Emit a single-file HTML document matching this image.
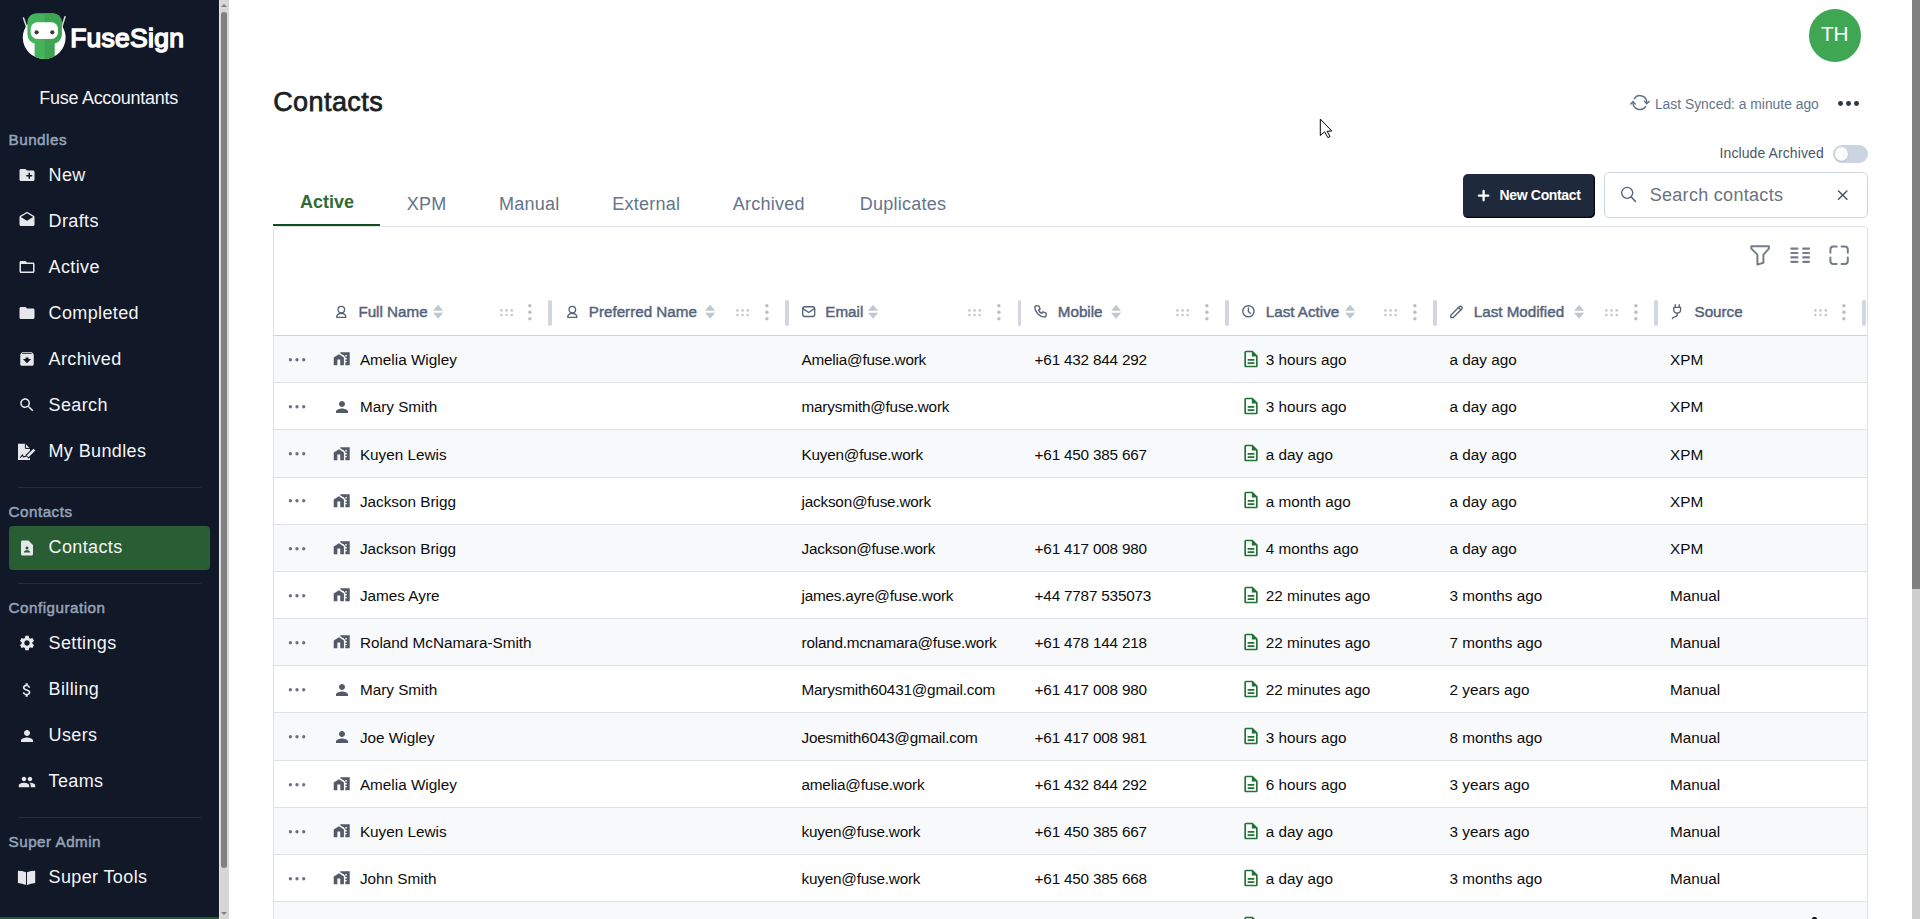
<!DOCTYPE html>
<html><head><meta charset="utf-8"><title>Contacts</title>
<style>
html,body{margin:0;padding:0;}
body{width:1920px;height:919px;overflow:hidden;position:relative;background:#fff;font-family:"Liberation Sans",sans-serif;}
.a{position:absolute;}
.t{position:absolute;line-height:1;white-space:nowrap;}
svg.a{overflow:visible;}
</style></head><body>
<div class="a" style="left:0px;top:0px;width:219px;height:919px;background:#111827;"></div>
<div class="a" style="left:0px;top:917px;width:219px;height:2px;background:#26592f;"></div>
<svg class="a" style="left:15px;top:5px;" width="60" height="60" viewBox="15 5 60 60">
<defs><clipPath id="lc"><circle cx="44.2" cy="37.6" r="21.4"/></clipPath></defs>
<line x1="23.5" y1="18" x2="27" y2="28" stroke="#d4d7da" stroke-width="1.6" stroke-linecap="round"/>
<line x1="65" y1="16.8" x2="61.8" y2="27" stroke="#d4d7da" stroke-width="1.6" stroke-linecap="round"/>
<circle cx="44.2" cy="37.6" r="21.4" fill="#ffffff"/>
<g clip-path="url(#lc)">
<rect x="34.6" y="40" width="19.9" height="20" fill="#46b35c"/>
<rect x="44.6" y="40" width="9.9" height="20" fill="#3ea452"/>
</g>
<rect x="27.4" y="13.2" width="34.3" height="30.4" rx="9" fill="#46b35c"/>
<path d="M44.6 13.2 H52.7 A9 9 0 0 1 61.7 22.2 V34.6 A9 9 0 0 1 52.7 43.6 H44.6 Z" fill="#3ea452"/>
<rect x="30.7" y="22.3" width="27.3" height="16.7" rx="6.5" fill="#ffffff"/>
<circle cx="36.6" cy="32.3" r="2.1" fill="#3b3b3b"/>
<circle cx="52.3" cy="32.3" r="2.1" fill="#3b3b3b"/>
</svg>
<div class="t " style="left:70.20px;top:25.17px;font-size:26.5px;color:#ffffff;letter-spacing:0.25px;-webkit-text-stroke:1.5px #ffffff;">FuseSign</div>
<div class="t " style="left:-0.90px;top:88.96px;font-size:18px;color:#f3f4f6;letter-spacing:-0.28px;width:219px;text-align:center;">Fuse Accountants</div>
<div class="t " style="left:8.60px;top:132.03px;font-size:15.2px;color:#94a3b8;letter-spacing:0.5px;-webkit-text-stroke:0.5px #94a3b8;">Bundles</div>
<div class="t " style="left:8.60px;top:504.43px;font-size:15.2px;color:#94a3b8;letter-spacing:0.5px;-webkit-text-stroke:0.5px #94a3b8;">Contacts</div>
<div class="t " style="left:8.60px;top:600.13px;font-size:15.2px;color:#94a3b8;letter-spacing:0.5px;-webkit-text-stroke:0.5px #94a3b8;">Configuration</div>
<div class="t " style="left:8.60px;top:834.13px;font-size:15.2px;color:#94a3b8;letter-spacing:0.5px;-webkit-text-stroke:0.5px #94a3b8;">Super Admin</div>
<div class="a" style="left:18px;top:487px;width:183px;height:1px;background:#222c3b;"></div>
<div class="a" style="left:18px;top:583px;width:183px;height:1px;background:#222c3b;"></div>
<div class="a" style="left:18px;top:817px;width:183px;height:1px;background:#222c3b;"></div>
<div class="a" style="left:9px;top:526px;width:201px;height:44px;background:#295d34;border-radius:4px;"></div>
<div class="t " style="left:48.50px;top:165.66px;font-size:18px;color:#f3f4f6;letter-spacing:0.38px;">New</div>
<div class="t " style="left:48.50px;top:211.71px;font-size:18px;color:#f3f4f6;letter-spacing:0.38px;">Drafts</div>
<div class="t " style="left:48.50px;top:257.76px;font-size:18px;color:#f3f4f6;letter-spacing:0.38px;">Active</div>
<div class="t " style="left:48.50px;top:303.81px;font-size:18px;color:#f3f4f6;letter-spacing:0.38px;">Completed</div>
<div class="t " style="left:48.50px;top:349.86px;font-size:18px;color:#f3f4f6;letter-spacing:0.38px;">Archived</div>
<div class="t " style="left:48.50px;top:395.91px;font-size:18px;color:#f3f4f6;letter-spacing:0.38px;">Search</div>
<div class="t " style="left:48.50px;top:441.96px;font-size:18px;color:#f3f4f6;letter-spacing:0.38px;">My Bundles</div>
<div class="t " style="left:48.50px;top:537.86px;font-size:18px;color:#f3f4f6;letter-spacing:0.38px;">Contacts</div>
<div class="t " style="left:48.50px;top:633.76px;font-size:18px;color:#f3f4f6;letter-spacing:0.38px;">Settings</div>
<div class="t " style="left:48.50px;top:679.96px;font-size:18px;color:#f3f4f6;letter-spacing:0.38px;">Billing</div>
<div class="t " style="left:48.50px;top:726.16px;font-size:18px;color:#f3f4f6;letter-spacing:0.38px;">Users</div>
<div class="t " style="left:48.50px;top:772.36px;font-size:18px;color:#f3f4f6;letter-spacing:0.38px;">Teams</div>
<div class="t " style="left:48.50px;top:868.46px;font-size:18px;color:#f3f4f6;letter-spacing:0.38px;">Super Tools</div>
<svg class="a" style="left:17.7px;top:166.4px;" width="18" height="18" viewBox="0 0 24 24"><path d="M20 6h-8l-2-2H4c-1.11 0-1.99.89-1.99 2L2 18c0 1.11.89 2 2 2h16c1.11 0 2-.89 2-2V8c0-1.11-.89-2-2-2zm-1 8h-3v3h-2v-3h-3v-2h3V9h2v3h3v2z" fill="#e5e7eb"/></svg>
<svg class="a" style="left:17.7px;top:211.2px;" width="18" height="18" viewBox="0 0 24 24"><path d="M21.99 8c0-.72-.37-1.35-.94-1.7L12 1 2.95 6.3C2.38 6.65 2 7.28 2 8v10c0 1.1.9 2 2 2h16c1.1 0 2-.9 2-2l-.01-10zM12 13L3.74 7.84 12 3l8.26 4.84L12 13z" fill="#e5e7eb"/></svg>
<svg class="a" style="left:17.7px;top:257.9px;" width="18" height="18" viewBox="0 0 24 24"><path d="M20 6h-8l-2-2H4c-1.1 0-1.99.9-1.99 2L2 18c0 1.1.9 2 2 2h16c1.1 0 2-.9 2-2V8c0-1.1-.9-2-2-2zm0 12H4V8h16v10z" fill="#e5e7eb"/></svg>
<svg class="a" style="left:17.7px;top:303.8px;" width="18" height="18" viewBox="0 0 24 24"><path d="M10 4H4c-1.1 0-1.99.9-1.99 2L2 18c0 1.1.9 2 2 2h16c1.1 0 2-.9 2-2V8c0-1.1-.9-2-2-2h-8l-2-2z" fill="#e5e7eb"/></svg>
<svg class="a" style="left:17.7px;top:350.4px;" width="18" height="18" viewBox="0 0 24 24"><path d="M20.54 5.23l-1.39-1.68C18.88 3.21 18.47 3 18 3H6c-.47 0-.88.21-1.16.55L3.46 5.23C3.17 5.57 3 6.02 3 6.5V19c0 1.1.9 2 2 2h14c1.1 0 2-.9 2-2V6.5c0-.48-.17-.93-.46-1.27zM12 17.5L6.5 12H10v-2h4v2h3.5L12 17.5zM5.12 5l.81-1h12l.94 1H5.12z" fill="#e5e7eb"/></svg>
<svg class="a" style="left:17.7px;top:395.8px;" width="18" height="18" viewBox="0 0 24 24"><path d="M15.5 14h-.79l-.28-.27C15.41 12.59 16 11.11 16 9.5 16 5.91 13.09 3 9.5 3S3 5.91 3 9.5 5.91 16 9.5 16c1.61 0 3.090-.59 4.23-1.57l.27.28v.79l5 4.99L20.49 19l-4.99-5zm-6 0C7.01 14 5 11.99 5 9.5S7.01 5 9.5 5 14 7.01 14 9.5 11.990 14 9.5 14z" fill="#e5e7eb"/></svg>
<svg class="a" style="left:17px;top:442px;" width="19" height="19" viewBox="17 442 19 19">
<path d="M18 443.8 H25.4 L30 448.4 V459.9 H18 Z" fill="#e5e7eb"/>
<path d="M25.4 443.8 V448.4 H30" fill="none" stroke="#111827" stroke-width="1"/>
<path d="M27 457 L34.6 449.4" stroke="#111827" stroke-width="4.6" stroke-linecap="butt"/>
<path d="M27.6 456.4 L34.4 449.6" stroke="#e5e7eb" stroke-width="2.6" stroke-linecap="butt"/>
<path d="M26.4 457.6 l1.2 -0.2 l-1 -1 z" fill="#e5e7eb"/>
<path d="M20.2 457.6 L22.5 455 L23.4 456.9 L26.4 456.3" fill="none" stroke="#111827" stroke-width="1.1"/>
</svg>
<svg class="a" style="left:18px;top:538.5px;" width="18" height="18" viewBox="0 0 24 24"><path d="M14 2H6c-1.1 0-1.99.9-1.99 2L4 20c0 1.1.89 2 1.99 2H18c1.1 0 2-.9 2-2V8l-6-6zm-2 8c1.1 0 2 .9 2 2s-.9 2-2 2-2-.9-2-2 .9-2 2-2zm4 8H8v-.57c0-.81.48-1.53 1.22-1.85.85-.37 1.79-.58 2.78-.58.99 0 1.93.21 2.78.58.74.32 1.22 1.04 1.22 1.85V18z" fill="#e5e7eb"/></svg>
<svg class="a" style="left:17.7px;top:633.8px;" width="18" height="18" viewBox="0 0 24 24"><path d="M19.14 12.94c.04-.3.06-.61.06-.94 0-.32-.02-.64-.07-.94l2.03-1.58c.18-.14.23-.41.12-.61l-1.92-3.32c-.12-.22-.37-.29-.59-.22l-2.39.96c-.5-.38-1.03-.7-1.62-.94l-.36-2.54c-.04-.24-.24-.41-.48-.41h-3.84c-.24 0-.43.17-.47.41l-.36 2.54c-.59.24-1.13.57-1.62.94l-2.39-.96c-.22-.08-.47 0-.59.22L2.74 8.87c-.12.21-.08.47.12.61l2.03 1.58c-.05.3-.09.63-.09.94s.02.64.07.94l-2.03 1.58c-.18.14-.23.41-.12.61l1.92 3.32c.12.22.37.29.59.22l2.39-.96c.5.38 1.03.7 1.62.94l.36 2.54c.05.24.24.41.48.41h3.84c.24 0 .44-.17.47-.41l.36-2.54c.59-.24 1.13-.56 1.62-.94l2.39.96c.22.08.47 0 .59-.22l1.92-3.32c.12-.22.07-.47-.12-.61l-2.01-1.58zM12 15.6c-1.98 0-3.6-1.62-3.6-3.6s1.62-3.6 3.6-3.6 3.6 1.62 3.6 3.6-1.62 3.6-3.6 3.6z" fill="#e5e7eb"/></svg>
<svg class="a" style="left:17.7px;top:680.8px;" width="18" height="18" viewBox="0 0 24 24"><path d="M11.8 10.9c-2.27-.59-3-1.2-3-2.15 0-1.09 1.01-1.85 2.7-1.85 1.78 0 2.44.85 2.5 2.1h2.21c-.07-1.72-1.12-3.3-3.21-3.81V3h-3v2.16c-1.94.42-3.5 1.68-3.5 3.610 0 2.31 1.91 3.46 4.7 4.13 2.5.6 3 1.48 3 2.41 0 .69-.49 1.79-2.7 1.79-2.06 0-2.87-.92-2.980-2.1h-2.2c.12 2.19 1.76 3.42 3.68 3.83V21h3v-2.15c1.95-.37 3.5-1.5 3.5-3.55 0-2.84-2.43-3.81-4.7-4.4z" fill="#e5e7eb"/></svg>
<svg class="a" style="left:17.7px;top:727px;" width="18" height="18" viewBox="0 0 24 24"><path d="M12 12c2.21 0 4-1.79 4-4s-1.79-4-4-4-4 1.79-4 4 1.79 4 4 4zm0 2c-2.67 0-8 1.34-8 4v2h16v-2c0-2.66-5.33-4-8-4z" fill="#e5e7eb"/></svg>
<svg class="a" style="left:17.7px;top:772.6px;" width="18" height="18" viewBox="0 0 24 24"><path d="M16 11c1.66 0 2.99-1.34 2.99-3S17.66 5 16 5c-1.66 0-3 1.34-3 3s1.34 3 3 3zm-8 0c1.66 0 2.99-1.34 2.99-3S9.66 5 8 5C6.34 5 5 6.34 5 8s1.34 3 3 3zm0 2c-2.33 0-7 1.17-7 3.5V19h14v-2.5c0-2.33-4.67-3.5-7-3.5zm8 0c-.29 0-.62.02-.97.05 1.16.84 1.97 1.97 1.97 3.45V19h6v-2.5c0-2.33-4.67-3.5-7-3.5z" fill="#e5e7eb"/></svg>
<svg class="a" style="left:17px;top:869px;" width="20" height="17" viewBox="17 869 20 17">
<path d="M17.9 870.8 Q22 870.8 26 872.2 V884.9 Q22 883.2 17.9 882.9 Z" fill="#e5e7eb"/>
<path d="M35.2 870.8 Q31 870.8 27 872.2 V884.9 Q31 883.2 35.2 882.9 Z" fill="#e5e7eb"/>
</svg>
<div class="a" style="left:219px;top:0px;width:10px;height:919px;background:#d6d6d6;border-left:1px solid #e6e6e6;box-sizing:border-box;"></div>
<div class="a" style="left:221px;top:12px;width:6px;height:856px;background:#808080;border-radius:3px;"></div>
<svg class="a" style="left:219px;top:0px;" width="10" height="12" viewBox="0 0 10 12"><path d="M2 7 L5 4 L8 7 Z" fill="#808080"/></svg>
<svg class="a" style="left:219px;top:907px;" width="10" height="12" viewBox="0 0 10 12"><path d="M2 5 L5 8 L8 5 Z" fill="#808080"/></svg>
<div class="a" style="left:1912px;top:0px;width:8px;height:919px;background:#cfcfcf;"></div>
<div class="a" style="left:1912px;top:0px;width:8px;height:589px;background:#808080;"></div>
<div class="a" style="left:1809px;top:9px;width:52.3px;height:52.6px;background:#3fa653;border-radius:50%;"></div>
<div class="t " style="left:1820.90px;top:24.29px;font-size:20.8px;color:#ffffff;">TH</div>
<div class="t " style="left:273.20px;top:88.84px;font-size:27px;color:#1c1f24;letter-spacing:0.42px;-webkit-text-stroke:0.75px #1c1f24;">Contacts</div>
<svg class="a" style="left:1628px;top:92px;" width="24" height="22" viewBox="1628 92 24 22"><g fill="none" stroke="#64748b" stroke-width="1.5" stroke-linecap="round" stroke-linejoin="round"><path d="M1634.25 98.64 A6.9 6.9 0 0 1 1646.8 102.6"/><path d="M1644.6 101.4 L1646.8 103.7 L1649 101.4"/><path d="M1645.55 106.56 A6.9 6.9 0 0 1 1633 102.6"/><path d="M1630.8 103.9 L1633 101.6 L1635.2 103.9"/></g></svg>
<div class="t " style="left:1654.90px;top:97.68px;font-size:13.85px;color:#64748b;">Last Synced: a minute ago</div>
<div class="a" style="left:1837.9px;top:101.1px;width:4.8px;height:4.8px;background:#2d3748;border-radius:50%;"></div>
<div class="a" style="left:1845.9px;top:101.1px;width:4.8px;height:4.8px;background:#2d3748;border-radius:50%;"></div>
<div class="a" style="left:1853.9px;top:101.1px;width:4.8px;height:4.8px;background:#2d3748;border-radius:50%;"></div>
<div class="t " style="left:1719.50px;top:145.85px;font-size:14px;color:#4a5568;letter-spacing:0.1px;">Include Archived</div>
<div class="a" style="left:1833px;top:145px;width:35px;height:18px;background:#cbd5e1;border-radius:9px;"></div>
<div class="a" style="left:1834.8px;top:147.1px;width:13.6px;height:13.6px;background:#f8fafc;border-radius:50%;box-shadow:0 0.5px 1px rgba(0,0,0,.2);"></div>
<div class="a" style="left:1463px;top:174px;width:131.6px;height:43.7px;background:#1e293b;border-radius:5px;box-shadow:inset -1.2px -1.2px 0 #05080d;"></div>
<svg class="a" style="left:1476px;top:188px;" width="15" height="15" viewBox="0 0 15 15"><path d="M7.6 2.9 V12.3 M2.9 7.6 H12.3" stroke="#fff" stroke-width="2.3" stroke-linecap="round"/></svg>
<div class="t " style="left:1499.60px;top:188.35px;font-size:14px;color:#ffffff;font-weight:700;letter-spacing:-0.35px;">New Contact</div>
<div class="a" style="left:1604px;top:172px;width:264px;height:46px;border:1px solid #cbd5e1;border-radius:5px;box-sizing:border-box;background:#fff;"></div>
<svg class="a" style="left:1619px;top:186px;" width="19" height="19" viewBox="0 0 19 19"><circle cx="8.2" cy="6.8" r="5.5" fill="none" stroke="#55637a" stroke-width="1.35"/><path d="M12.1 10.7 L16.4 15.5" stroke="#55637a" stroke-width="1.5" stroke-linecap="round"/></svg>
<div class="t " style="left:1649.70px;top:185.56px;font-size:18px;color:#6b7280;letter-spacing:0.3px;">Search contacts</div>
<svg class="a" style="left:1836px;top:189px;" width="13" height="12" viewBox="0 0 13 12"><path d="M2.5 2 L10.9 10.3 M10.9 2 L2.5 10.3" stroke="#4b5563" stroke-width="1.5" stroke-linecap="round"/></svg>
<div class="t " style="left:300.00px;top:192.86px;font-size:18px;color:#2f6b35;font-weight:700;">Active</div>
<div class="t " style="left:406.70px;top:194.66px;font-size:18px;color:#64748b;letter-spacing:0.25px;">XPM</div>
<div class="t " style="left:498.90px;top:194.66px;font-size:18px;color:#64748b;letter-spacing:0.25px;">Manual</div>
<div class="t " style="left:612.20px;top:194.66px;font-size:18px;color:#64748b;letter-spacing:0.25px;">External</div>
<div class="t " style="left:732.75px;top:194.66px;font-size:18px;color:#64748b;letter-spacing:0.25px;">Archived</div>
<div class="t " style="left:859.70px;top:194.66px;font-size:18px;color:#64748b;letter-spacing:0.25px;">Duplicates</div>
<div class="a" style="left:273px;top:226px;width:1595px;height:720px;border:1px solid #dee2e6;border-radius:4px;box-sizing:border-box;background:#fff;"></div>
<div class="a" style="left:273px;top:224px;width:107px;height:2.2px;background:#114f1a;"></div>
<svg class="a" style="left:1748px;top:243px;" width="24" height="25" viewBox="1748 243 24 25"><path d="M1751.3 246.2 H1768.9 V248.6 L1763.4 254.6 V262.8 L1757.4 264.6 V254.6 L1751.3 248.6 Z" fill="none" stroke="#767d88" stroke-width="2" stroke-linejoin="round"/></svg>
<svg class="a" style="left:1788px;top:246px;" width="24" height="18" viewBox="1788 246 24 18"><path d="M1791.3 248.6 H1797.4" stroke="#767d88" stroke-width="2.2" stroke-linecap="round"/><path d="M1803.2 248.6 H1809" stroke="#767d88" stroke-width="2.2" stroke-linecap="round"/><path d="M1791.3 253 H1797.4" stroke="#767d88" stroke-width="2.2" stroke-linecap="round"/><path d="M1803.2 253 H1809" stroke="#767d88" stroke-width="2.2" stroke-linecap="round"/><path d="M1791.3 257.4 H1797.4" stroke="#767d88" stroke-width="2.2" stroke-linecap="round"/><path d="M1803.2 257.4 H1809" stroke="#767d88" stroke-width="2.2" stroke-linecap="round"/><path d="M1791.3 261.8 H1797.4" stroke="#767d88" stroke-width="2.2" stroke-linecap="round"/><path d="M1803.2 261.8 H1809" stroke="#767d88" stroke-width="2.2" stroke-linecap="round"/></svg>
<svg class="a" style="left:1827px;top:243px;" width="24" height="24" viewBox="1827 243 24 24"><g fill="none" stroke="#767d88" stroke-width="2" stroke-linecap="round"><path d="M1830.4 252.7 V249.4 A3 3 0 0 1 1833.4 246.4 H1836.7"/><path d="M1841.5 246.4 H1844.8 A3 3 0 0 1 1847.8 249.4 V252.7"/><path d="M1847.8 257.6 V260.9 A3 3 0 0 1 1844.8 263.9 H1841.5"/><path d="M1836.7 263.9 H1833.4 A3 3 0 0 1 1830.4 260.9 V257.6"/></g></svg>
<svg class="a" style="left:335.5px;top:304.5px;" width="11" height="14" viewBox="0 0 11 14"><g fill="none" stroke="#55637a" stroke-width="1.35" stroke-linecap="round" stroke-linejoin="round"><circle cx="5.3" cy="4.6" r="3.3"/><path d="M0.7 12.3 Q0.7 8.6 5.3 8.4 Q9.9 8.6 9.9 12.3 Z"/></g></svg>
<div class="t " style="left:358.40px;top:304.43px;font-size:15.2px;color:#55637a;-webkit-text-stroke:0.45px #55637a;">Full Name</div>
<svg class="a" style="left:432.9px;top:304px;" width="11" height="15" viewBox="0 0 11 15"><path d="M0 6.7 L5.1 0.8 L10.2 6.7 Z M0 8.8 L5.1 14.7 L10.2 8.8 Z" fill="#c2c7cd"/></svg>
<svg class="a" style="left:499.55px;top:308.6px;" width="14" height="7" viewBox="0 0 14 7"><g fill="#c4c8ce"><circle cx="1.35" cy="1.4" r="1.3"/><circle cx="1.35" cy="6.0" r="1.3"/><circle cx="6.550000000000001" cy="1.4" r="1.3"/><circle cx="6.550000000000001" cy="6.0" r="1.3"/><circle cx="11.75" cy="1.4" r="1.3"/><circle cx="11.75" cy="6.0" r="1.3"/></g></svg>
<svg class="a" style="left:528.35px;top:303.8px;" width="4" height="17" viewBox="0 0 4 17"><g fill="#babfc6"><circle cx="1.85" cy="1.85" r="1.75"/><circle cx="1.85" cy="8.35" r="1.75"/><circle cx="1.85" cy="14.85" r="1.75"/></g></svg>
<div class="a" style="left:548.1px;top:300px;width:3.8px;height:25.6px;background:#d0d7e0;border-radius:2px;"></div>
<svg class="a" style="left:566.7px;top:304.5px;" width="11" height="14" viewBox="0 0 11 14"><g fill="none" stroke="#55637a" stroke-width="1.35" stroke-linecap="round" stroke-linejoin="round"><circle cx="5.3" cy="4.6" r="3.3"/><path d="M0.7 12.3 Q0.7 8.6 5.3 8.4 Q9.9 8.6 9.9 12.3 Z"/></g></svg>
<div class="t " style="left:588.80px;top:304.43px;font-size:15.2px;color:#55637a;-webkit-text-stroke:0.45px #55637a;">Preferred Name</div>
<svg class="a" style="left:704.6px;top:304px;" width="11" height="15" viewBox="0 0 11 15"><path d="M0 6.7 L5.1 0.8 L10.2 6.7 Z M0 8.8 L5.1 14.7 L10.2 8.8 Z" fill="#c2c7cd"/></svg>
<svg class="a" style="left:736.45px;top:308.6px;" width="14" height="7" viewBox="0 0 14 7"><g fill="#c4c8ce"><circle cx="1.35" cy="1.4" r="1.3"/><circle cx="1.35" cy="6.0" r="1.3"/><circle cx="6.550000000000001" cy="1.4" r="1.3"/><circle cx="6.550000000000001" cy="6.0" r="1.3"/><circle cx="11.75" cy="1.4" r="1.3"/><circle cx="11.75" cy="6.0" r="1.3"/></g></svg>
<svg class="a" style="left:764.9499999999999px;top:303.8px;" width="4" height="17" viewBox="0 0 4 17"><g fill="#babfc6"><circle cx="1.85" cy="1.85" r="1.75"/><circle cx="1.85" cy="8.35" r="1.75"/><circle cx="1.85" cy="14.85" r="1.75"/></g></svg>
<div class="a" style="left:785.4px;top:300px;width:3.8px;height:25.6px;background:#d0d7e0;border-radius:2px;"></div>
<svg class="a" style="left:802.3px;top:306.2px;" width="14" height="11.5" viewBox="0 0 14 11.5"><g fill="none" stroke="#55637a" stroke-width="1.35" stroke-linecap="round" stroke-linejoin="round"><rect x="0.7" y="0.7" width="12" height="9.8" rx="2"/><path d="M1 2.6 L6.7 6.5 L12.4 2.6"/></g></svg>
<div class="t " style="left:825.30px;top:304.43px;font-size:15.2px;color:#55637a;-webkit-text-stroke:0.45px #55637a;">Email</div>
<svg class="a" style="left:867.9px;top:304px;" width="11" height="15" viewBox="0 0 11 15"><path d="M0 6.7 L5.1 0.8 L10.2 6.7 Z M0 8.8 L5.1 14.7 L10.2 8.8 Z" fill="#c2c7cd"/></svg>
<svg class="a" style="left:968.45px;top:308.6px;" width="14" height="7" viewBox="0 0 14 7"><g fill="#c4c8ce"><circle cx="1.35" cy="1.4" r="1.3"/><circle cx="1.35" cy="6.0" r="1.3"/><circle cx="6.550000000000001" cy="1.4" r="1.3"/><circle cx="6.550000000000001" cy="6.0" r="1.3"/><circle cx="11.75" cy="1.4" r="1.3"/><circle cx="11.75" cy="6.0" r="1.3"/></g></svg>
<svg class="a" style="left:997.15px;top:303.8px;" width="4" height="17" viewBox="0 0 4 17"><g fill="#babfc6"><circle cx="1.85" cy="1.85" r="1.75"/><circle cx="1.85" cy="8.35" r="1.75"/><circle cx="1.85" cy="14.85" r="1.75"/></g></svg>
<div class="a" style="left:1017.5px;top:300px;width:3.8px;height:25.6px;background:#d0d7e0;border-radius:2px;"></div>
<svg class="a" style="left:1034.1px;top:304.6px;" width="14" height="14" viewBox="0 0 14 14"><g fill="none" stroke="#55637a" stroke-width="1.35" stroke-linecap="round" stroke-linejoin="round"><path d="M2.2 0.8 h2.6 l1.3 3.3 -1.6 1 a7.2 7.2 0 0 0 3.3 3.3 l1 -1.6 3.3 1.3 v2.6 a1.3 1.3 0 0 1 -1.3 1.3 A10.5 10.5 0 0 1 0.8 2.1 a1.3 1.3 0 0 1 1.4 -1.3"/></g></svg>
<div class="t " style="left:1057.80px;top:304.43px;font-size:15.2px;color:#55637a;-webkit-text-stroke:0.45px #55637a;">Mobile</div>
<svg class="a" style="left:1110.9px;top:304px;" width="11" height="15" viewBox="0 0 11 15"><path d="M0 6.7 L5.1 0.8 L10.2 6.7 Z M0 8.8 L5.1 14.7 L10.2 8.8 Z" fill="#c2c7cd"/></svg>
<svg class="a" style="left:1176.45px;top:308.6px;" width="14" height="7" viewBox="0 0 14 7"><g fill="#c4c8ce"><circle cx="1.35" cy="1.4" r="1.3"/><circle cx="1.35" cy="6.0" r="1.3"/><circle cx="6.550000000000001" cy="1.4" r="1.3"/><circle cx="6.550000000000001" cy="6.0" r="1.3"/><circle cx="11.75" cy="1.4" r="1.3"/><circle cx="11.75" cy="6.0" r="1.3"/></g></svg>
<svg class="a" style="left:1205.15px;top:303.8px;" width="4" height="17" viewBox="0 0 4 17"><g fill="#babfc6"><circle cx="1.85" cy="1.85" r="1.75"/><circle cx="1.85" cy="8.35" r="1.75"/><circle cx="1.85" cy="14.85" r="1.75"/></g></svg>
<div class="a" style="left:1225.3px;top:300px;width:3.8px;height:25.6px;background:#d0d7e0;border-radius:2px;"></div>
<svg class="a" style="left:1242.3px;top:305px;" width="13" height="13" viewBox="0 0 13 13"><g fill="none" stroke="#55637a" stroke-width="1.35" stroke-linecap="round" stroke-linejoin="round"><circle cx="6.4" cy="6.3" r="5.6"/><path d="M6.4 3 V6.4 L8.3 8.3"/></g></svg>
<div class="t " style="left:1265.75px;top:304.43px;font-size:15.2px;color:#55637a;-webkit-text-stroke:0.45px #55637a;">Last Active</div>
<svg class="a" style="left:1344.9px;top:304px;" width="11" height="15" viewBox="0 0 11 15"><path d="M0 6.7 L5.1 0.8 L10.2 6.7 Z M0 8.8 L5.1 14.7 L10.2 8.8 Z" fill="#c2c7cd"/></svg>
<svg class="a" style="left:1384.45px;top:308.6px;" width="14" height="7" viewBox="0 0 14 7"><g fill="#c4c8ce"><circle cx="1.35" cy="1.4" r="1.3"/><circle cx="1.35" cy="6.0" r="1.3"/><circle cx="6.550000000000001" cy="1.4" r="1.3"/><circle cx="6.550000000000001" cy="6.0" r="1.3"/><circle cx="11.75" cy="1.4" r="1.3"/><circle cx="11.75" cy="6.0" r="1.3"/></g></svg>
<svg class="a" style="left:1413.15px;top:303.8px;" width="4" height="17" viewBox="0 0 4 17"><g fill="#babfc6"><circle cx="1.85" cy="1.85" r="1.75"/><circle cx="1.85" cy="8.35" r="1.75"/><circle cx="1.85" cy="14.85" r="1.75"/></g></svg>
<div class="a" style="left:1433.2px;top:300px;width:3.8px;height:25.6px;background:#d0d7e0;border-radius:2px;"></div>
<svg class="a" style="left:1450.0px;top:304.6px;" width="13" height="14" viewBox="0 0 13 14"><g fill="none" stroke="#55637a" stroke-width="1.35" stroke-linecap="round" stroke-linejoin="round"><path d="M0.8 12.6 h2.4 l8.4 -8.4 a1.7 1.7 0 1 0 -2.4 -2.4 l-8.4 8.4 v2.4"/><path d="M8.4 2.4 l2.4 2.4"/></g></svg>
<div class="t " style="left:1473.75px;top:304.43px;font-size:15.2px;color:#55637a;-webkit-text-stroke:0.45px #55637a;">Last Modified</div>
<svg class="a" style="left:1573.65px;top:304px;" width="11" height="15" viewBox="0 0 11 15"><path d="M0 6.7 L5.1 0.8 L10.2 6.7 Z M0 8.8 L5.1 14.7 L10.2 8.8 Z" fill="#c2c7cd"/></svg>
<svg class="a" style="left:1605.45px;top:308.6px;" width="14" height="7" viewBox="0 0 14 7"><g fill="#c4c8ce"><circle cx="1.35" cy="1.4" r="1.3"/><circle cx="1.35" cy="6.0" r="1.3"/><circle cx="6.550000000000001" cy="1.4" r="1.3"/><circle cx="6.550000000000001" cy="6.0" r="1.3"/><circle cx="11.75" cy="1.4" r="1.3"/><circle cx="11.75" cy="6.0" r="1.3"/></g></svg>
<svg class="a" style="left:1633.9px;top:303.8px;" width="4" height="17" viewBox="0 0 4 17"><g fill="#babfc6"><circle cx="1.85" cy="1.85" r="1.75"/><circle cx="1.85" cy="8.35" r="1.75"/><circle cx="1.85" cy="14.85" r="1.75"/></g></svg>
<div class="a" style="left:1653.8px;top:300px;width:3.8px;height:25.6px;background:#d0d7e0;border-radius:2px;"></div>
<svg class="a" style="left:1671.3px;top:304.2px;" width="11" height="16" viewBox="0 0 11 16"><g fill="none" stroke="#55637a" stroke-width="1.35" stroke-linecap="round" stroke-linejoin="round"><path d="M4.3 0.7 V3.3 M8.2 0.7 V3.3"/><path d="M2.8 3.3 H9.6 V5.8 A3.4 3.4 0 0 1 2.8 5.8 Z"/><path d="M6.2 9.2 V10.8 Q6.2 12.6 3.6 12.9 Q2 13.2 1.3 14.6"/></g></svg>
<div class="t " style="left:1694.50px;top:304.43px;font-size:15.2px;color:#55637a;-webkit-text-stroke:0.45px #55637a;">Source</div>
<svg class="a" style="left:1813.75px;top:308.6px;" width="14" height="7" viewBox="0 0 14 7"><g fill="#c4c8ce"><circle cx="1.35" cy="1.4" r="1.3"/><circle cx="1.35" cy="6.0" r="1.3"/><circle cx="6.550000000000001" cy="1.4" r="1.3"/><circle cx="6.550000000000001" cy="6.0" r="1.3"/><circle cx="11.75" cy="1.4" r="1.3"/><circle cx="11.75" cy="6.0" r="1.3"/></g></svg>
<svg class="a" style="left:1842.15px;top:303.8px;" width="4" height="17" viewBox="0 0 4 17"><g fill="#babfc6"><circle cx="1.85" cy="1.85" r="1.75"/><circle cx="1.85" cy="8.35" r="1.75"/><circle cx="1.85" cy="14.85" r="1.75"/></g></svg>
<div class="a" style="left:1862.0px;top:300px;width:3.8px;height:25.6px;background:#d0d7e0;border-radius:2px;"></div>
<div class="a" style="left:274px;top:335px;width:1593px;height:1px;background:#ced4da;"></div>
<div class="a" style="left:274px;top:336.0px;width:1593px;height:46.18px;background:#f8f9fa;"></div>
<div class="a" style="left:274px;top:382.18px;width:1593px;height:1px;background:#dee2e6;"></div>
<svg class="a" style="left:286px;top:356.89px;" width="22" height="6" viewBox="0 0 22 6"><circle cx="4.399999999999977" cy="2.75" r="1.65" fill="#6b7280"/><circle cx="11.0" cy="2.75" r="1.65" fill="#6b7280"/><circle cx="17.69999999999999" cy="2.75" r="1.65" fill="#6b7280"/></svg>
<svg class="a" style="left:333.07px;top:350.19px;" width="17.45" height="17.45" viewBox="0 0 24 24"><path d="M8.17 5.7L1 10.48V21h5v-8h4v8h5V10.25z M10 3v1.51l2 1.33L13.73 7H15v.85l2 1.34V11h2v2h-2v2h2v2h-2v4h6V3H10zm9 6h-2V7h2v2z" fill="#525a68"/></svg>
<div class="t " style="left:359.90px;top:352.14px;font-size:15.3px;color:#0c0c0c;">Amelia Wigley</div>
<div class="t " style="left:801.50px;top:352.14px;font-size:15.3px;color:#0c0c0c;letter-spacing:-0.2px;">Amelia@fuse.work</div>
<div class="t " style="left:1034.60px;top:352.14px;font-size:15.3px;color:#0c0c0c;letter-spacing:-0.2px;">+61 432 844 292</div>
<svg class="a" style="left:1240.9px;top:348.89px;" width="20" height="20" viewBox="0 0 24 24"><path d="M8 16h8v2H8zm0-4h8v2H8zm6-10H6c-1.1 0-2 .9-2 2v16c0 1.1.89 2 1.99 2H18c1.1 0 2-.9 2-2V8l-6-6zm4 18H6V4h7v5h5v11z" fill="#227233"/></svg>
<div class="t " style="left:1265.75px;top:352.14px;font-size:15.3px;color:#0c0c0c;">3 hours ago</div>
<div class="t " style="left:1449.50px;top:352.14px;font-size:15.3px;color:#0c0c0c;">a day ago</div>
<div class="t " style="left:1670.00px;top:352.14px;font-size:15.3px;color:#0c0c0c;">XPM</div>
<div class="a" style="left:274px;top:429.36px;width:1593px;height:1px;background:#dee2e6;"></div>
<svg class="a" style="left:286px;top:404.07px;" width="22" height="6" viewBox="0 0 22 6"><circle cx="4.399999999999977" cy="2.75" r="1.65" fill="#6b7280"/><circle cx="11.0" cy="2.75" r="1.65" fill="#6b7280"/><circle cx="17.69999999999999" cy="2.75" r="1.65" fill="#6b7280"/></svg>
<svg class="a" style="left:332.9px;top:397.9px;" width="18" height="18" viewBox="0 0 24 24"><path d="M12 12c2.21 0 4-1.79 4-4s-1.79-4-4-4-4 1.79-4 4 1.79 4 4 4zm0 2c-2.67 0-8 1.34-8 4v2h16v-2c0-2.66-5.33-4-8-4z" fill="#525a68"/></svg>
<div class="t " style="left:359.90px;top:399.32px;font-size:15.3px;color:#0c0c0c;">Mary Smith</div>
<div class="t " style="left:801.50px;top:399.32px;font-size:15.3px;color:#0c0c0c;letter-spacing:-0.2px;">marysmith@fuse.work</div>
<div class="t " style="left:1034.60px;top:399.32px;font-size:15.3px;color:#0c0c0c;letter-spacing:-0.2px;"></div>
<svg class="a" style="left:1240.9px;top:396.07px;" width="20" height="20" viewBox="0 0 24 24"><path d="M8 16h8v2H8zm0-4h8v2H8zm6-10H6c-1.1 0-2 .9-2 2v16c0 1.1.89 2 1.99 2H18c1.1 0 2-.9 2-2V8l-6-6zm4 18H6V4h7v5h5v11z" fill="#227233"/></svg>
<div class="t " style="left:1265.75px;top:399.32px;font-size:15.3px;color:#0c0c0c;">3 hours ago</div>
<div class="t " style="left:1449.50px;top:399.32px;font-size:15.3px;color:#0c0c0c;">a day ago</div>
<div class="t " style="left:1670.00px;top:399.32px;font-size:15.3px;color:#0c0c0c;">XPM</div>
<div class="a" style="left:274px;top:430.36px;width:1593px;height:46.18px;background:#f8f9fa;"></div>
<div class="a" style="left:274px;top:476.54px;width:1593px;height:1px;background:#dee2e6;"></div>
<svg class="a" style="left:286px;top:451.25px;" width="22" height="6" viewBox="0 0 22 6"><circle cx="4.399999999999977" cy="2.75" r="1.65" fill="#6b7280"/><circle cx="11.0" cy="2.75" r="1.65" fill="#6b7280"/><circle cx="17.69999999999999" cy="2.75" r="1.65" fill="#6b7280"/></svg>
<svg class="a" style="left:333.07px;top:444.55px;" width="17.45" height="17.45" viewBox="0 0 24 24"><path d="M8.17 5.7L1 10.48V21h5v-8h4v8h5V10.25z M10 3v1.51l2 1.33L13.73 7H15v.85l2 1.34V11h2v2h-2v2h2v2h-2v4h6V3H10zm9 6h-2V7h2v2z" fill="#525a68"/></svg>
<div class="t " style="left:359.90px;top:446.50px;font-size:15.3px;color:#0c0c0c;">Kuyen Lewis</div>
<div class="t " style="left:801.50px;top:446.50px;font-size:15.3px;color:#0c0c0c;letter-spacing:-0.2px;">Kuyen@fuse.work</div>
<div class="t " style="left:1034.60px;top:446.50px;font-size:15.3px;color:#0c0c0c;letter-spacing:-0.2px;">+61 450 385 667</div>
<svg class="a" style="left:1240.9px;top:443.25px;" width="20" height="20" viewBox="0 0 24 24"><path d="M8 16h8v2H8zm0-4h8v2H8zm6-10H6c-1.1 0-2 .9-2 2v16c0 1.1.89 2 1.99 2H18c1.1 0 2-.9 2-2V8l-6-6zm4 18H6V4h7v5h5v11z" fill="#227233"/></svg>
<div class="t " style="left:1265.75px;top:446.50px;font-size:15.3px;color:#0c0c0c;">a day ago</div>
<div class="t " style="left:1449.50px;top:446.50px;font-size:15.3px;color:#0c0c0c;">a day ago</div>
<div class="t " style="left:1670.00px;top:446.50px;font-size:15.3px;color:#0c0c0c;">XPM</div>
<div class="a" style="left:274px;top:523.72px;width:1593px;height:1px;background:#dee2e6;"></div>
<svg class="a" style="left:286px;top:498.43px;" width="22" height="6" viewBox="0 0 22 6"><circle cx="4.399999999999977" cy="2.75" r="1.65" fill="#6b7280"/><circle cx="11.0" cy="2.75" r="1.65" fill="#6b7280"/><circle cx="17.69999999999999" cy="2.75" r="1.65" fill="#6b7280"/></svg>
<svg class="a" style="left:333.07px;top:491.73px;" width="17.45" height="17.45" viewBox="0 0 24 24"><path d="M8.17 5.7L1 10.48V21h5v-8h4v8h5V10.25z M10 3v1.51l2 1.33L13.73 7H15v.85l2 1.34V11h2v2h-2v2h2v2h-2v4h6V3H10zm9 6h-2V7h2v2z" fill="#525a68"/></svg>
<div class="t " style="left:359.90px;top:493.68px;font-size:15.3px;color:#0c0c0c;">Jackson Brigg</div>
<div class="t " style="left:801.50px;top:493.68px;font-size:15.3px;color:#0c0c0c;letter-spacing:-0.2px;">jackson@fuse.work</div>
<div class="t " style="left:1034.60px;top:493.68px;font-size:15.3px;color:#0c0c0c;letter-spacing:-0.2px;"></div>
<svg class="a" style="left:1240.9px;top:490.43px;" width="20" height="20" viewBox="0 0 24 24"><path d="M8 16h8v2H8zm0-4h8v2H8zm6-10H6c-1.1 0-2 .9-2 2v16c0 1.1.89 2 1.99 2H18c1.1 0 2-.9 2-2V8l-6-6zm4 18H6V4h7v5h5v11z" fill="#227233"/></svg>
<div class="t " style="left:1265.75px;top:493.68px;font-size:15.3px;color:#0c0c0c;">a month ago</div>
<div class="t " style="left:1449.50px;top:493.68px;font-size:15.3px;color:#0c0c0c;">a day ago</div>
<div class="t " style="left:1670.00px;top:493.68px;font-size:15.3px;color:#0c0c0c;">XPM</div>
<div class="a" style="left:274px;top:524.72px;width:1593px;height:46.18px;background:#f8f9fa;"></div>
<div class="a" style="left:274px;top:570.9px;width:1593px;height:1px;background:#dee2e6;"></div>
<svg class="a" style="left:286px;top:545.61px;" width="22" height="6" viewBox="0 0 22 6"><circle cx="4.399999999999977" cy="2.75" r="1.65" fill="#6b7280"/><circle cx="11.0" cy="2.75" r="1.65" fill="#6b7280"/><circle cx="17.69999999999999" cy="2.75" r="1.65" fill="#6b7280"/></svg>
<svg class="a" style="left:333.07px;top:538.91px;" width="17.45" height="17.45" viewBox="0 0 24 24"><path d="M8.17 5.7L1 10.48V21h5v-8h4v8h5V10.25z M10 3v1.51l2 1.33L13.73 7H15v.85l2 1.34V11h2v2h-2v2h2v2h-2v4h6V3H10zm9 6h-2V7h2v2z" fill="#525a68"/></svg>
<div class="t " style="left:359.90px;top:540.86px;font-size:15.3px;color:#0c0c0c;">Jackson Brigg</div>
<div class="t " style="left:801.50px;top:540.86px;font-size:15.3px;color:#0c0c0c;letter-spacing:-0.2px;">Jackson@fuse.work</div>
<div class="t " style="left:1034.60px;top:540.86px;font-size:15.3px;color:#0c0c0c;letter-spacing:-0.2px;">+61 417 008 980</div>
<svg class="a" style="left:1240.9px;top:537.61px;" width="20" height="20" viewBox="0 0 24 24"><path d="M8 16h8v2H8zm0-4h8v2H8zm6-10H6c-1.1 0-2 .9-2 2v16c0 1.1.89 2 1.99 2H18c1.1 0 2-.9 2-2V8l-6-6zm4 18H6V4h7v5h5v11z" fill="#227233"/></svg>
<div class="t " style="left:1265.75px;top:540.86px;font-size:15.3px;color:#0c0c0c;">4 months ago</div>
<div class="t " style="left:1449.50px;top:540.86px;font-size:15.3px;color:#0c0c0c;">a day ago</div>
<div class="t " style="left:1670.00px;top:540.86px;font-size:15.3px;color:#0c0c0c;">XPM</div>
<div class="a" style="left:274px;top:618.08px;width:1593px;height:1px;background:#dee2e6;"></div>
<svg class="a" style="left:286px;top:592.79px;" width="22" height="6" viewBox="0 0 22 6"><circle cx="4.399999999999977" cy="2.75" r="1.65" fill="#6b7280"/><circle cx="11.0" cy="2.75" r="1.65" fill="#6b7280"/><circle cx="17.69999999999999" cy="2.75" r="1.65" fill="#6b7280"/></svg>
<svg class="a" style="left:333.07px;top:586.09px;" width="17.45" height="17.45" viewBox="0 0 24 24"><path d="M8.17 5.7L1 10.48V21h5v-8h4v8h5V10.25z M10 3v1.51l2 1.33L13.73 7H15v.85l2 1.34V11h2v2h-2v2h2v2h-2v4h6V3H10zm9 6h-2V7h2v2z" fill="#525a68"/></svg>
<div class="t " style="left:359.90px;top:588.04px;font-size:15.3px;color:#0c0c0c;">James Ayre</div>
<div class="t " style="left:801.50px;top:588.04px;font-size:15.3px;color:#0c0c0c;letter-spacing:-0.2px;">james.ayre@fuse.work</div>
<div class="t " style="left:1034.60px;top:588.04px;font-size:15.3px;color:#0c0c0c;letter-spacing:-0.2px;">+44 7787 535073</div>
<svg class="a" style="left:1240.9px;top:584.79px;" width="20" height="20" viewBox="0 0 24 24"><path d="M8 16h8v2H8zm0-4h8v2H8zm6-10H6c-1.1 0-2 .9-2 2v16c0 1.1.89 2 1.99 2H18c1.1 0 2-.9 2-2V8l-6-6zm4 18H6V4h7v5h5v11z" fill="#227233"/></svg>
<div class="t " style="left:1265.75px;top:588.04px;font-size:15.3px;color:#0c0c0c;">22 minutes ago</div>
<div class="t " style="left:1449.50px;top:588.04px;font-size:15.3px;color:#0c0c0c;">3 months ago</div>
<div class="t " style="left:1670.00px;top:588.04px;font-size:15.3px;color:#0c0c0c;">Manual</div>
<div class="a" style="left:274px;top:619.08px;width:1593px;height:46.18px;background:#f8f9fa;"></div>
<div class="a" style="left:274px;top:665.26px;width:1593px;height:1px;background:#dee2e6;"></div>
<svg class="a" style="left:286px;top:639.97px;" width="22" height="6" viewBox="0 0 22 6"><circle cx="4.399999999999977" cy="2.75" r="1.65" fill="#6b7280"/><circle cx="11.0" cy="2.75" r="1.65" fill="#6b7280"/><circle cx="17.69999999999999" cy="2.75" r="1.65" fill="#6b7280"/></svg>
<svg class="a" style="left:333.07px;top:633.27px;" width="17.45" height="17.45" viewBox="0 0 24 24"><path d="M8.17 5.7L1 10.48V21h5v-8h4v8h5V10.25z M10 3v1.51l2 1.33L13.73 7H15v.85l2 1.34V11h2v2h-2v2h2v2h-2v4h6V3H10zm9 6h-2V7h2v2z" fill="#525a68"/></svg>
<div class="t " style="left:359.90px;top:635.22px;font-size:15.3px;color:#0c0c0c;">Roland McNamara-Smith</div>
<div class="t " style="left:801.50px;top:635.22px;font-size:15.3px;color:#0c0c0c;letter-spacing:-0.2px;">roland.mcnamara@fuse.work</div>
<div class="t " style="left:1034.60px;top:635.22px;font-size:15.3px;color:#0c0c0c;letter-spacing:-0.2px;">+61 478 144 218</div>
<svg class="a" style="left:1240.9px;top:631.97px;" width="20" height="20" viewBox="0 0 24 24"><path d="M8 16h8v2H8zm0-4h8v2H8zm6-10H6c-1.1 0-2 .9-2 2v16c0 1.1.89 2 1.99 2H18c1.1 0 2-.9 2-2V8l-6-6zm4 18H6V4h7v5h5v11z" fill="#227233"/></svg>
<div class="t " style="left:1265.75px;top:635.22px;font-size:15.3px;color:#0c0c0c;">22 minutes ago</div>
<div class="t " style="left:1449.50px;top:635.22px;font-size:15.3px;color:#0c0c0c;">7 months ago</div>
<div class="t " style="left:1670.00px;top:635.22px;font-size:15.3px;color:#0c0c0c;">Manual</div>
<div class="a" style="left:274px;top:712.44px;width:1593px;height:1px;background:#dee2e6;"></div>
<svg class="a" style="left:286px;top:687.15px;" width="22" height="6" viewBox="0 0 22 6"><circle cx="4.399999999999977" cy="2.75" r="1.65" fill="#6b7280"/><circle cx="11.0" cy="2.75" r="1.65" fill="#6b7280"/><circle cx="17.69999999999999" cy="2.75" r="1.65" fill="#6b7280"/></svg>
<svg class="a" style="left:332.9px;top:680.98px;" width="18" height="18" viewBox="0 0 24 24"><path d="M12 12c2.21 0 4-1.79 4-4s-1.79-4-4-4-4 1.79-4 4 1.79 4 4 4zm0 2c-2.67 0-8 1.34-8 4v2h16v-2c0-2.66-5.33-4-8-4z" fill="#525a68"/></svg>
<div class="t " style="left:359.90px;top:682.40px;font-size:15.3px;color:#0c0c0c;">Mary Smith</div>
<div class="t " style="left:801.50px;top:682.40px;font-size:15.3px;color:#0c0c0c;letter-spacing:-0.2px;">Marysmith60431@gmail.com</div>
<div class="t " style="left:1034.60px;top:682.40px;font-size:15.3px;color:#0c0c0c;letter-spacing:-0.2px;">+61 417 008 980</div>
<svg class="a" style="left:1240.9px;top:679.15px;" width="20" height="20" viewBox="0 0 24 24"><path d="M8 16h8v2H8zm0-4h8v2H8zm6-10H6c-1.1 0-2 .9-2 2v16c0 1.1.89 2 1.99 2H18c1.1 0 2-.9 2-2V8l-6-6zm4 18H6V4h7v5h5v11z" fill="#227233"/></svg>
<div class="t " style="left:1265.75px;top:682.40px;font-size:15.3px;color:#0c0c0c;">22 minutes ago</div>
<div class="t " style="left:1449.50px;top:682.40px;font-size:15.3px;color:#0c0c0c;">2 years ago</div>
<div class="t " style="left:1670.00px;top:682.40px;font-size:15.3px;color:#0c0c0c;">Manual</div>
<div class="a" style="left:274px;top:713.44px;width:1593px;height:46.18px;background:#f8f9fa;"></div>
<div class="a" style="left:274px;top:759.62px;width:1593px;height:1px;background:#dee2e6;"></div>
<svg class="a" style="left:286px;top:734.33px;" width="22" height="6" viewBox="0 0 22 6"><circle cx="4.399999999999977" cy="2.75" r="1.65" fill="#6b7280"/><circle cx="11.0" cy="2.75" r="1.65" fill="#6b7280"/><circle cx="17.69999999999999" cy="2.75" r="1.65" fill="#6b7280"/></svg>
<svg class="a" style="left:332.9px;top:728.16px;" width="18" height="18" viewBox="0 0 24 24"><path d="M12 12c2.21 0 4-1.79 4-4s-1.79-4-4-4-4 1.79-4 4 1.79 4 4 4zm0 2c-2.67 0-8 1.34-8 4v2h16v-2c0-2.66-5.33-4-8-4z" fill="#525a68"/></svg>
<div class="t " style="left:359.90px;top:729.58px;font-size:15.3px;color:#0c0c0c;">Joe Wigley</div>
<div class="t " style="left:801.50px;top:729.58px;font-size:15.3px;color:#0c0c0c;letter-spacing:-0.2px;">Joesmith6043@gmail.com</div>
<div class="t " style="left:1034.60px;top:729.58px;font-size:15.3px;color:#0c0c0c;letter-spacing:-0.2px;">+61 417 008 981</div>
<svg class="a" style="left:1240.9px;top:726.33px;" width="20" height="20" viewBox="0 0 24 24"><path d="M8 16h8v2H8zm0-4h8v2H8zm6-10H6c-1.1 0-2 .9-2 2v16c0 1.1.89 2 1.99 2H18c1.1 0 2-.9 2-2V8l-6-6zm4 18H6V4h7v5h5v11z" fill="#227233"/></svg>
<div class="t " style="left:1265.75px;top:729.58px;font-size:15.3px;color:#0c0c0c;">3 hours ago</div>
<div class="t " style="left:1449.50px;top:729.58px;font-size:15.3px;color:#0c0c0c;">8 months ago</div>
<div class="t " style="left:1670.00px;top:729.58px;font-size:15.3px;color:#0c0c0c;">Manual</div>
<div class="a" style="left:274px;top:806.8px;width:1593px;height:1px;background:#dee2e6;"></div>
<svg class="a" style="left:286px;top:781.51px;" width="22" height="6" viewBox="0 0 22 6"><circle cx="4.399999999999977" cy="2.75" r="1.65" fill="#6b7280"/><circle cx="11.0" cy="2.75" r="1.65" fill="#6b7280"/><circle cx="17.69999999999999" cy="2.75" r="1.65" fill="#6b7280"/></svg>
<svg class="a" style="left:333.07px;top:774.81px;" width="17.45" height="17.45" viewBox="0 0 24 24"><path d="M8.17 5.7L1 10.48V21h5v-8h4v8h5V10.25z M10 3v1.51l2 1.33L13.73 7H15v.85l2 1.34V11h2v2h-2v2h2v2h-2v4h6V3H10zm9 6h-2V7h2v2z" fill="#525a68"/></svg>
<div class="t " style="left:359.90px;top:776.76px;font-size:15.3px;color:#0c0c0c;">Amelia Wigley</div>
<div class="t " style="left:801.50px;top:776.76px;font-size:15.3px;color:#0c0c0c;letter-spacing:-0.2px;">amelia@fuse.work</div>
<div class="t " style="left:1034.60px;top:776.76px;font-size:15.3px;color:#0c0c0c;letter-spacing:-0.2px;">+61 432 844 292</div>
<svg class="a" style="left:1240.9px;top:773.51px;" width="20" height="20" viewBox="0 0 24 24"><path d="M8 16h8v2H8zm0-4h8v2H8zm6-10H6c-1.1 0-2 .9-2 2v16c0 1.1.89 2 1.99 2H18c1.1 0 2-.9 2-2V8l-6-6zm4 18H6V4h7v5h5v11z" fill="#227233"/></svg>
<div class="t " style="left:1265.75px;top:776.76px;font-size:15.3px;color:#0c0c0c;">6 hours ago</div>
<div class="t " style="left:1449.50px;top:776.76px;font-size:15.3px;color:#0c0c0c;">3 years ago</div>
<div class="t " style="left:1670.00px;top:776.76px;font-size:15.3px;color:#0c0c0c;">Manual</div>
<div class="a" style="left:274px;top:807.8px;width:1593px;height:46.18px;background:#f8f9fa;"></div>
<div class="a" style="left:274px;top:853.98px;width:1593px;height:1px;background:#dee2e6;"></div>
<svg class="a" style="left:286px;top:828.69px;" width="22" height="6" viewBox="0 0 22 6"><circle cx="4.399999999999977" cy="2.75" r="1.65" fill="#6b7280"/><circle cx="11.0" cy="2.75" r="1.65" fill="#6b7280"/><circle cx="17.69999999999999" cy="2.75" r="1.65" fill="#6b7280"/></svg>
<svg class="a" style="left:333.07px;top:821.99px;" width="17.45" height="17.45" viewBox="0 0 24 24"><path d="M8.17 5.7L1 10.48V21h5v-8h4v8h5V10.25z M10 3v1.51l2 1.33L13.73 7H15v.85l2 1.34V11h2v2h-2v2h2v2h-2v4h6V3H10zm9 6h-2V7h2v2z" fill="#525a68"/></svg>
<div class="t " style="left:359.90px;top:823.94px;font-size:15.3px;color:#0c0c0c;">Kuyen Lewis</div>
<div class="t " style="left:801.50px;top:823.94px;font-size:15.3px;color:#0c0c0c;letter-spacing:-0.2px;">kuyen@fuse.work</div>
<div class="t " style="left:1034.60px;top:823.94px;font-size:15.3px;color:#0c0c0c;letter-spacing:-0.2px;">+61 450 385 667</div>
<svg class="a" style="left:1240.9px;top:820.69px;" width="20" height="20" viewBox="0 0 24 24"><path d="M8 16h8v2H8zm0-4h8v2H8zm6-10H6c-1.1 0-2 .9-2 2v16c0 1.1.89 2 1.99 2H18c1.1 0 2-.9 2-2V8l-6-6zm4 18H6V4h7v5h5v11z" fill="#227233"/></svg>
<div class="t " style="left:1265.75px;top:823.94px;font-size:15.3px;color:#0c0c0c;">a day ago</div>
<div class="t " style="left:1449.50px;top:823.94px;font-size:15.3px;color:#0c0c0c;">3 years ago</div>
<div class="t " style="left:1670.00px;top:823.94px;font-size:15.3px;color:#0c0c0c;">Manual</div>
<div class="a" style="left:274px;top:901.16px;width:1593px;height:1px;background:#dee2e6;"></div>
<svg class="a" style="left:286px;top:875.87px;" width="22" height="6" viewBox="0 0 22 6"><circle cx="4.399999999999977" cy="2.75" r="1.65" fill="#6b7280"/><circle cx="11.0" cy="2.75" r="1.65" fill="#6b7280"/><circle cx="17.69999999999999" cy="2.75" r="1.65" fill="#6b7280"/></svg>
<svg class="a" style="left:333.07px;top:869.17px;" width="17.45" height="17.45" viewBox="0 0 24 24"><path d="M8.17 5.7L1 10.48V21h5v-8h4v8h5V10.25z M10 3v1.51l2 1.33L13.73 7H15v.85l2 1.34V11h2v2h-2v2h2v2h-2v4h6V3H10zm9 6h-2V7h2v2z" fill="#525a68"/></svg>
<div class="t " style="left:359.90px;top:871.12px;font-size:15.3px;color:#0c0c0c;">John Smith</div>
<div class="t " style="left:801.50px;top:871.12px;font-size:15.3px;color:#0c0c0c;letter-spacing:-0.2px;">kuyen@fuse.work</div>
<div class="t " style="left:1034.60px;top:871.12px;font-size:15.3px;color:#0c0c0c;letter-spacing:-0.2px;">+61 450 385 668</div>
<svg class="a" style="left:1240.9px;top:867.87px;" width="20" height="20" viewBox="0 0 24 24"><path d="M8 16h8v2H8zm0-4h8v2H8zm6-10H6c-1.1 0-2 .9-2 2v16c0 1.1.89 2 1.99 2H18c1.1 0 2-.9 2-2V8l-6-6zm4 18H6V4h7v5h5v11z" fill="#227233"/></svg>
<div class="t " style="left:1265.75px;top:871.12px;font-size:15.3px;color:#0c0c0c;">a day ago</div>
<div class="t " style="left:1449.50px;top:871.12px;font-size:15.3px;color:#0c0c0c;">3 months ago</div>
<div class="t " style="left:1670.00px;top:871.12px;font-size:15.3px;color:#0c0c0c;">Manual</div>
<div class="a" style="left:274px;top:902.16px;width:1593px;height:46.18px;background:#f8f9fa;"></div>
<div class="a" style="left:274px;top:948.34px;width:1593px;height:1px;background:#dee2e6;"></div>
<svg class="a" style="left:286px;top:923.05px;" width="22" height="6" viewBox="0 0 22 6"><circle cx="4.399999999999977" cy="2.75" r="1.65" fill="#6b7280"/><circle cx="11.0" cy="2.75" r="1.65" fill="#6b7280"/><circle cx="17.69999999999999" cy="2.75" r="1.65" fill="#6b7280"/></svg>
<svg class="a" style="left:332.9px;top:916.88px;" width="18" height="18" viewBox="0 0 24 24"><path d="M12 12c2.21 0 4-1.79 4-4s-1.79-4-4-4-4 1.79-4 4 1.79 4 4 4zm0 2c-2.67 0-8 1.34-8 4v2h16v-2c0-2.66-5.33-4-8-4z" fill="#525a68"/></svg>
<div class="t " style="left:359.90px;top:918.30px;font-size:15.3px;color:#0c0c0c;"></div>
<div class="t " style="left:801.50px;top:918.30px;font-size:15.3px;color:#0c0c0c;letter-spacing:-0.2px;"></div>
<div class="t " style="left:1034.60px;top:918.30px;font-size:15.3px;color:#0c0c0c;letter-spacing:-0.2px;"></div>
<svg class="a" style="left:1240.9px;top:915.05px;" width="20" height="20" viewBox="0 0 24 24"><path d="M8 16h8v2H8zm0-4h8v2H8zm6-10H6c-1.1 0-2 .9-2 2v16c0 1.1.89 2 1.99 2H18c1.1 0 2-.9 2-2V8l-6-6zm4 18H6V4h7v5h5v11z" fill="#227233"/></svg>
<div class="t " style="left:1265.75px;top:918.30px;font-size:15.3px;color:#0c0c0c;"></div>
<div class="t " style="left:1449.50px;top:918.30px;font-size:15.3px;color:#0c0c0c;"></div>
<div class="t " style="left:1670.00px;top:918.30px;font-size:15.3px;color:#0c0c0c;"></div>
<div class="a" style="left:1812px;top:916.5px;width:5px;height:3px;background:#111;border-radius:2px 2px 0 0;"></div>
<svg class="a" style="left:1318px;top:117px;" width="16" height="22" viewBox="1318 117 16 22"><path d="M1320.3 119.1 V135.5 L1324.6 131.8 L1327.9 137.6 L1330 136.5 L1327.1 131.3 L1331.8 131 Z" fill="#fff" stroke="#000" stroke-width="1" stroke-linejoin="round"/></svg>
</body></html>
